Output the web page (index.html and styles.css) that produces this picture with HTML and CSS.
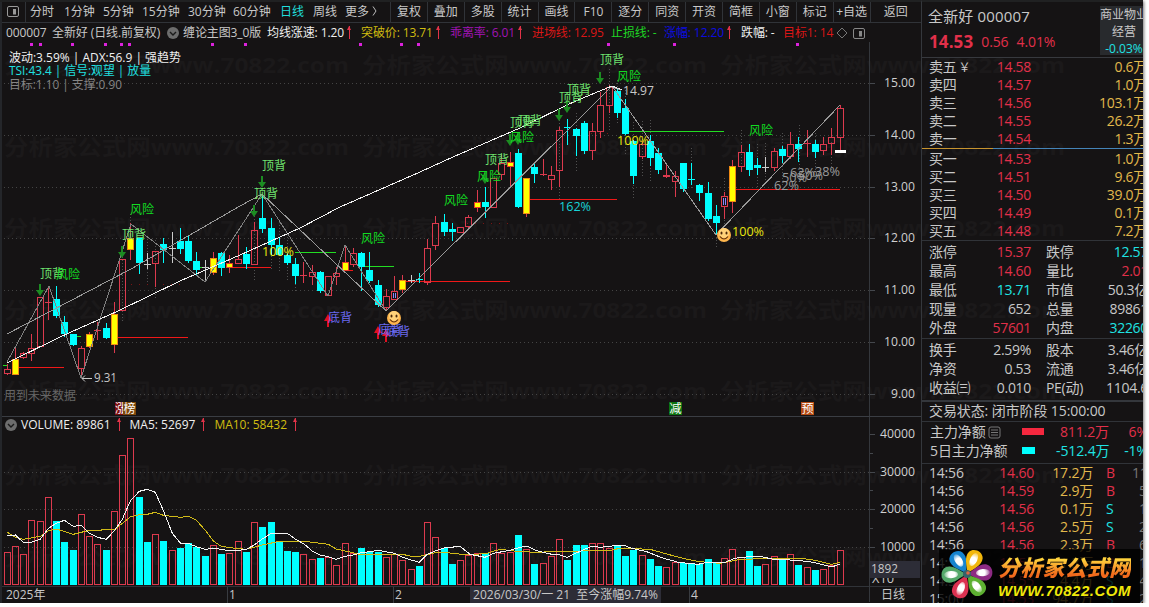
FILE: index.html
```html
<!DOCTYPE html>
<html lang="zh-CN">

<head>
    <meta charset="UTF-8">
    <meta name="viewport" content="width=device-width, initial-scale=1.0">
    <title>全新好 000007</title>
    <link rel="stylesheet" href="styles.css">
</head>

<body>
    <div class="app">
        <div class="main">
            <div class="toolbar">
                <div class="periods">
                    <span class="panel-btn"><svg width="12" height="11" viewBox="0 0 12 11"><rect x=".5" y=".5" width="11" height="10" rx="1.5" fill="none" stroke="#999"/><rect x="6" y="3" width="3" height="5.5" fill="#999"/></svg></span>
                    <span>分时</span>
                    <span>1分钟</span>
                    <span>5分钟</span>
                    <span>15分钟</span>
                    <span>30分钟</span>
                    <span>60分钟</span>
                    <span class="active">日线</span>
                    <span>周线</span>
                    <span>更多 <svg width="6" height="10" viewBox="0 0 6 10"><path d="M1 .5l3 4.5-3 4.5" fill="none" stroke="#bbb"/></svg></span>
                </div>
                <div class="tools">
                    <span>复权</span>
                    <span>叠加</span>
                    <span>多股</span>
                    <span>统计</span>
                    <span>画线</span>
                    <span>F10</span>
                    <span>逐分</span>
                    <span>同资</span>
                    <span>开资</span>
                    <span>简框</span>
                    <span>小窗</span>
                    <span>标记</span>
                    <span>+自选</span>
                    <span>返回</span>
                </div>
            </div>
            <div class="indicator">
                <span>000007</span>
                <span>全新好 (日线.前复权)</span>
                <span class="chev"><svg width="12" height="12" viewBox="0 0 12 12"><circle cx="6" cy="6" r="6" fill="#6d6d6d"/><path d="M3 5l3 3 3-3" fill="none" stroke="#1a1a1a" stroke-width="1.4"/></svg></span>
                <span>缠论主图3_0版</span>
                <span class="white">均线涨速: 1.20<i class="up"></i></span>
                <span class="yellow">突破价: 13.71<i class="up"></i></span>
                <span class="purple">乖离率: 6.01<i class="up"></i></span>
                <span class="red">进场线: 12.95</span>
                <span class="green">止损线: -</span>
                <span class="blue">涨幅: 12.20<i class="up"></i></span>
                <span class="white">跌幅: -</span>
                <span class="red">目标1: 14</span>
                <span><svg width="12" height="12" viewBox="0 0 12 12"><path d="M6 1l5 5-5 5-5-5z" fill="none" stroke="#777"/></svg></span>
                <span><svg width="12" height="11" viewBox="0 0 12 11"><rect x=".5" y=".5" width="11" height="10" rx="1.5" fill="none" stroke="#888"/><rect x="6" y="3" width="3" height="5.5" fill="#888"/></svg></span>
            </div>
            <svg class="kline" id="kline" width="919" height="374" viewBox="2 42 919 374"></svg>
            <div class="vol-head">
                <svg width="12" height="12" viewBox="0 0 12 12"><circle cx="6" cy="6" r="6" fill="#6d6d6d"/><path d="M3 5l3 3 3-3" fill="none" stroke="#1a1a1a" stroke-width="1.4"/></svg>
                <span class="white">VOLUME: 89861<i class="up"></i></span>
                <span class="white">MA5: 52697<i class="up"></i></span>
                <span class="yellow">MA10: 58432<i class="up"></i></span>
            </div>
            <svg class="volume" id="volume" width="919" height="152" viewBox="2 434 919 152"></svg>
            <div class="timeline">
                <span>2025年</span>
                <span class="month">1</span>
                <span class="month">2</span>
                <span class="cursor-date">2026/03/30/一 21&nbsp; 至今涨幅9.74%</span>
                <span class="month">4</span>
                <span class="cycle">日线</span>
            </div>
        </div>

        <div class="quote">
            <div class="quote-inner">
                <div class="head">
                    <div>
                        <div class="name">全新好 000007</div>
                        <div class="price"><b>14.53</b><span>0.56</span><span>4.01%</span></div>
                    </div>
                    <div class="sector">
                        <span>商业物业</span>
                        <span>经营</span>
                        <span class="cy">-0.03%</span>
                    </div>
                </div>
                <div class="book asks">
                    <div><span>卖五<small>￥</small></span><span class="r">14.58</span><span class="g">0.6万</span></div>
                    <div><span>卖四</span><span class="r">14.57</span><span class="g">1.0万</span></div>
                    <div><span>卖三</span><span class="r">14.56</span><span class="g">103.1万</span></div>
                    <div><span>卖二</span><span class="r">14.55</span><span class="g">26.2万</span></div>
                    <div><span>卖一</span><span class="r">14.54</span><span class="g">1.3万</span></div>
                </div>
                <div class="ratio"></div>
                <div class="book bids">
                    <div><span>买一</span><span class="r">14.53</span><span class="g">1.0万</span></div>
                    <div><span>买二</span><span class="r">14.51</span><span class="g">9.6万</span></div>
                    <div><span>买三</span><span class="r">14.50</span><span class="g">39.0万</span></div>
                    <div><span>买四</span><span class="r">14.49</span><span class="g">0.1万</span></div>
                    <div><span>买五</span><span class="r">14.48</span><span class="g">7.2万</span></div>
                </div>
                <div class="stats">
                    <div><span>涨停</span><span class="r">15.37</span><span>跌停</span><span class="cy">12.57</span></div>
                    <div><span>最高</span><span class="r">14.60</span><span>量比</span><span class="r">2.01</span></div>
                    <div><span>最低</span><span class="cy">13.71</span><span>市值</span><span>50.3亿</span></div>
                    <div><span>现量</span><span>652</span><span>总量</span><span>89861</span></div>
                    <div><span>外盘</span><span class="r">57601</span><span>内盘</span><span class="cy">32260</span></div>
                </div>
                <div class="stats extra">
                    <div><span>换手</span><span>2.59%</span><span>股本</span><span>3.46亿</span></div>
                    <div><span>净资</span><span>0.53</span><span>流通</span><span>3.46亿</span></div>
                    <div><span>收益㈢</span><span>0.010</span><span>PE(动)</span><span>1104.6</span></div>
                </div>
                <div class="status">交易状态: 闭市阶段 15:00:00</div>
                <div class="flow">
                    <div><span>主力净额<svg width="13" height="13" viewBox="0 0 13 13"><rect x="1" y="1" width="11" height="11" rx="2" fill="none" stroke="#777"/><path d="M3 4h7M3 6.5h7M3 9h7" stroke="#777"/></svg></span><i class="bar-in"></i><span class="r">811.2万</span><span class="r">6%</span></div>
                    <div><span>5日主力净额</span><i class="bar-out"></i><span class="cy">-512.4万</span><span class="cy">-1%</span></div>
                </div>
                <div class="ticks">
                    <div><span>14:56</span><span class="r">14.60</span><span class="g">17.2万</span><span class="r">B</span><span class="n wide">11</span></div>
                    <div><span>14:56</span><span class="r">14.59</span><span class="g">2.9万</span><span class="r">B</span><span class="n">5</span></div>
                    <div><span>14:56</span><span class="r">14.56</span><span class="g">0.1万</span><span class="cy">S</span><span class="n">1</span></div>
                    <div><span>14:56</span><span class="r">14.56</span><span class="g">2.5万</span><span class="cy">S</span><span class="n">2</span></div>
                    <div><span>14:56</span><span class="r">14.56</span><span class="g">2.3万</span><span class="r">B</span><span class="n">6</span></div>
                    <div><span>14:56</span><span class="r">14.56</span><span class="g">1.3万</span><span class="r">B</span><span class="n">1</span></div>
                    <div><span>14:57</span><span class="r">14.55</span><span class="g">4.4万</span><span class="cy">S</span><span class="n">4</span></div>
                    <div><span>15:00</span><span class="r">14.53</span><span class="g">94.7万</span><span class="cy">S</span><span class="n">29</span></div>
                </div>
            </div>
        </div>

        <div class="brand">
            <svg class="flower" width="56" height="54" viewBox="-28 -27 56 54">
                <defs>
                    <radialGradient id="core" gradientUnits="userSpaceOnUse" cx="0" cy="-15" r="9">
                        <stop offset="0" stop-color="#fff"/>
                        <stop offset=".35" stop-color="#fff"/>
                        <stop offset="1" stop-color="#fff" stop-opacity="0"/>
                    </radialGradient>
                    <path id="petal" d="M0 -1C-4 -8 -10 -14 -7.500 -21C-5 -27 5 -27 7.500 -21C10 -14 4 -8 0 -1z"/>
                    <ellipse id="glow" cx="0" cy="-16" rx="3.600" ry="7" fill="url(#core)"/>
                </defs>
                <g transform="rotate(-32)"><use href="#petal" fill="#1584cf"/><use href="#glow"/></g>
                <g transform="rotate(25)"><use href="#petal" fill="#f2b70c"/><use href="#glow"/></g>
                <g transform="rotate(85)"><use href="#petal" fill="#8d2a83"/><use href="#glow"/></g>
                <g transform="rotate(142)"><use href="#petal" fill="#5db031"/><use href="#glow"/></g>
                <g transform="rotate(203)"><use href="#petal" fill="#dc3151"/><use href="#glow"/></g>
                <g transform="rotate(268)"><use href="#petal" fill="#55a86a"/><use href="#glow"/></g>
                <circle r="4" fill="#35636b"/><circle cx="1" cy="-1" r="1.800" fill="#df6544"/>
            </svg>
            <div class="brand-text">
                <strong>分析家公式网</strong>
                <em>WWW.70822.COM</em>
            </div>
        </div>
    </div>

    <script src="chart.js"></script>
</body>

</html>
```

FILE: styles.css
```css
body {
    margin: 0;
    background: #fff;
    font-family: "Open Sans", "Noto Sans CJK SC", sans-serif;
    font-size: 12px;
    color: #c8c8c8;
    overflow: hidden;
}

.app {
    position: relative;
    display: flex;
    width: 1143px;
    height: 603px;
    background: #151314;
    box-shadow: 1px 1px 3px #777;
    overflow: hidden;
}

.app span {
    white-space: nowrap;
}

.main {
    box-sizing: border-box;
    width: 921px;
    padding-left: 2px;
    background: #151314;
    border-top: 2px solid #202122;
    box-shadow: inset 2px 0 #24262a;
    flex: none;
}

/* top toolbar */
.toolbar {
    display: flex;
    height: 20px;
    border-bottom: 1px solid #303338;
    line-height: 19px;
}

.periods {
    display: grid;
    grid-template-columns: 28px 34px 39px 39px 46px 45px 47px 33px 32px 45px;
    width: 388px;
}

.panel-btn {
    box-sizing: border-box;
    width: 24px;
    padding-left: 5px;
    border-right: 1px solid #303338;
}

.panel-btn svg {
    vertical-align: -1px;
}

.periods .active {
    color: #20dedc;
}

.tools {
    display: grid;
    grid-template-columns: repeat(13, 36.9px) 1fr;
    flex: 1;
    text-align: center;
}

.tools span {
    border-left: 1px solid #303338;
}

/* indicator line over the chart */
.indicator {
    display: grid;
    grid-template-columns: 46px 115px 16px 84px 94px 89px 82px 79px 53px 77px 42px 53px 17px 16px;
    height: 19px;
    padding-left: 4px;
    line-height: 19px;
    letter-spacing: -0.1px;
}

.indicator svg {
    vertical-align: -2px;
}

.up {
    display: inline-block;
    position: relative;
    width: 1px;
    height: 13px;
    margin-left: 5px;
    background: #e23348;
    vertical-align: -2px;
}

.up::before {
    content: "";
    position: absolute;
    left: -2px;
    top: 0;
    border: 2.5px solid transparent;
    border-top: 0;
    border-bottom: 4px solid #e23348;
}

.white { color: #efefef; }
.yellow { color: #d1bd10; }
.purple { color: #a113b4; }
.red { color: #dc1616; }
.green { color: #1fd624; }
.blue { color: #0c0ce0; }

.kline, .volume {
    display: block;
    overflow: visible;
}

.vol-head {
    display: flex;
    height: 17px;
    padding-left: 3px;
    border-top: 1px solid #3a3d43;
    line-height: 15px;
    align-items: flex-start;
}

.vol-head svg {
    margin: 2px 4px 0 0;
}

.vol-head .up {
    margin-left: 8px;
    margin-right: 10px;
}

.timeline {
    display: grid;
    grid-template-columns: 221px 166px 77px 219px 179px 1fr;
    height: 16px;
    padding-left: 4px;
    border-top: 1px solid #303338;
    line-height: 15px;
}

.timeline .month {
    border-left: 1px solid #383b40;
    padding-left: 1px;
}

.cursor-date {
    width: 191px;
    background: #2d2d37;
    text-align: center;
}

.cycle {
    padding-left: 13px;
}

/* quote panel */
.quote {
    width: 222px;
    overflow: hidden;
    border-left: 1px solid #34373c;
    border-top: 2px solid #202122;
    box-sizing: border-box;
}

.quote-inner {
    width: 226px;
    font-size: 14px;
}

.r { color: #e2304a; }
.g { color: #e2b94c; }
.cy { color: #1fe3e3; }

.head {
    display: flex;
    justify-content: space-between;
    height: 55px;
    border-bottom: 1px solid #37393e;
}

.name {
    padding: 4px 0 0 6px;
    font-size: 15px;
    line-height: 20px;
    letter-spacing: 0.15px;
}

.price {
    display: flex;
    gap: 8px;
    padding-left: 7px;
    line-height: 31px;
    color: #e2304a;
    letter-spacing: -0.1px;
}

.price b {
    font-size: 17px;
    letter-spacing: 0.1px;
}

.sector {
    display: flex;
    flex-direction: column;
    width: 48px;
    height: 49px;
    margin-top: 4px;
    background: #282a2d;
    font-size: 12px;
    line-height: 17px;
    text-align: center;
}

.book div {
    display: grid;
    grid-template-columns: 50px 52px 1fr;
    height: 18px;
    padding: 0 1px 0 7px;
    line-height: 18px;
    letter-spacing: -0.3px;
}

.book small {
    margin-left: 2px;
    font-size: 12px;
}

.book span + span {
    text-align: right;
}

.ratio {
    height: 1px;
    background: linear-gradient(to right, #c7942f 71px, #4484b8 71px);
}

.bids {
    padding-top: 1px;
}

.stats {
    border-top: 1px solid #303338;
    padding: 1px 0;
}

.stats div {
    display: grid;
    grid-template-columns: 50px 52px 62px 1fr;
    height: 19px;
    padding-left: 7px;
    line-height: 19px;
    letter-spacing: -0.3px;
}

.stats span:nth-child(even) {
    text-align: right;
}

.stats span:nth-child(3) {
    padding-left: 15px;
}

.extra {
    padding: 1px 0 3px;
}

.status {
    height: 19px;
    padding-left: 7px;
    border-top: 2px solid #34373c;
    border-bottom: 1px solid #303338;
    line-height: 18px;
    letter-spacing: -0.1px;
}

.flow {
    padding: 0 0 3px;
    border-bottom: 1px solid #303338;
}

.flow div {
    display: grid;
    grid-template-columns: 92px 34px 53px 1fr;
    align-items: center;
    height: 19px;
    padding-left: 8px;
    line-height: 19px;
    letter-spacing: -0.1px;
}

.flow svg {
    margin-left: 2px;
    vertical-align: -2px;
}

.flow span:nth-child(3),
.flow span:nth-child(4) {
    text-align: right;
}

.bar-in {
    width: 22px;
    height: 7px;
    background: #f5283f;
}

.bar-out {
    width: 13px;
    height: 7px;
    background: #00ffff;
}

.ticks div {
    display: grid;
    grid-template-columns: 50px 55px 59px 27px 1fr;
    height: 18px;
    padding-left: 7px;
    line-height: 18px;
    letter-spacing: -0.2px;
}

.ticks span:nth-child(2),
.ticks span:nth-child(3) {
    text-align: right;
}

.ticks span:nth-child(4) {
    padding-left: 13px;
}

.ticks .n {
    padding-left: 19px;
    color: #777;
}

.ticks .wide {
    padding-left: 12px;
}

/* site logo over the lower corner */
.brand {
    position: absolute;
    left: 939px;
    top: 549px;
    display: flex;
    width: 201px;
    height: 54px;
    background: rgba(0, 0, 0, 0.82);
}

.flower {
    margin-top: -2px;
}

.brand-text {
    display: flex;
    flex-direction: column;
    margin-left: 3px;
}

.brand strong {
    font-size: 22px;
    font-weight: 900;
    font-style: italic;
    line-height: 30px;
    margin-top: 3px;
    letter-spacing: 0.2px;
    background: linear-gradient(#ffd23c 25%, #f26a1c 75%);
    -webkit-background-clip: text;
    color: transparent;
    white-space: nowrap;
}

.brand em {
    font: italic bold 15px/17px "Liberation Sans", sans-serif;
    letter-spacing: 0.5px;
    color: #efe70a;
}

/* svg text */
.mark {
    font-size: 22px;
    font-weight: bold;
    fill: #1b191a;
}

.lbl { font-size: 12px; }
.top { fill: #6fe36f; }
.risk { fill: #12dc22; }
.bottom { fill: #6a6af0; }
.axis { font-size: 12px; fill: #d0d0d0; text-anchor: end; }
.badge { font-size: 12px; fill: #fff; }
```

FILE: chart.js
```javascript
const kline = document.getElementById('kline');
const volume = document.getElementById('volume');

const RED = '#dc3a4e';
const CYAN = '#00ffff';

const barX = i => Math.floor(7.1 + i * 8.247);

function rect(x, y, w, h, fill, stroke) {
    if (stroke) {
        return `<rect x="${x + 0.5}" y="${y + 0.5}" width="${w - 1}" height="${Math.max(h - 1, 1)}" fill="${fill}" stroke="${stroke}"/>`;
    }
    return `<rect x="${x}" y="${y}" width="${w}" height="${h}" fill="${fill}"/>`;
}

function poly(points, color, extra = '') {
    return `<polyline points="${points}" fill="none" stroke="${color}" ${extra}/>`;
}

function text(x, y, str, cls, fill = '', len = 0) {
    const f = fill ? ` fill="${fill}"` : '';
    const l = len ? ` textLength="${len}" lengthAdjust="spacingAndGlyphs"` : '';
    return `<text x="${x}" y="${y}" class="${cls}"${f}${l}>${str}</text>`;
}

// faint background text
function watermark(rows) {
    let s = '';
    for (const y of rows) {
        for (const x of [4, 362, 720]) {
            s += text(x, y + 8, '分析家公式网www.70822.com', 'mark', '', 345);
        }
    }
    return s;
}

// type, high, body top, body bottom, low
// r hollow, c falling, y yellow, w doji, p striped
const candles = [
    ['r', 364, 369, 374, 375], ['y', 347, 359, 375, 375], ['r', 352, 353, 358, 359], ['r', 334, 348, 354, 361],
    ['r', 297, 297, 347, 347], ['r', 286, 302, 303, 320], ['c', 286, 299, 316, 318], ['c', 316, 322, 334, 337],
    ['c', 334, 334, 345, 346], ['r', 346, 348, 369, 378], ['y', 332, 334, 347, 348], ['r', 322, 330, 331, 340],
    ['c', 323, 328, 338, 339], ['y', 302, 314, 345, 353], ['r', 259, 259, 311, 311], ['y', 223, 238, 250, 260],
    ['c', 238, 238, 263, 274], ['w', 253, 264, 265, 269], ['r', 251, 251, 264, 287], ['c', 238, 244, 250, 263],
    ['w', 232, 248, 249, 263], ['c', 228, 241, 249, 254], ['c', 235, 241, 261, 263], ['c', 252, 261, 270, 276],
    ['w', 260, 267, 268, 281], ['y', 252, 258, 273, 275], ['c', 252, 253, 268, 276], ['y', 255, 263, 268, 273],
    ['r', 235, 259, 264, 264], ['c', 247, 254, 264, 269], ['r', 222, 230, 265, 265], ['c', 195, 218, 229, 233],
    ['c', 218, 228, 245, 255], ['c', 237, 245, 255, 256], ['c', 253, 255, 263, 265], ['c', 258, 264, 276, 284],
    ['r', 262, 275, 276, 283], ['r', 265, 272, 277, 285], ['c', 271, 272, 291, 293], ['r', 276, 276, 296, 296],
    ['r', 267, 273, 277, 285], ['y', 245, 262, 271, 271], ['r', 248, 253, 265, 267], ['c', 252, 253, 267, 291],
    ['c', 252, 270, 281, 283], ['c', 280, 285, 305, 307], ['r', 289, 296, 308, 311], ['p', 276, 291, 300, 300],
    ['y', 275, 280, 290, 293], ['w', 275, 280, 281, 283], ['c', 273, 279, 280, 283], ['r', 239, 248, 283, 285],
    ['r', 216, 223, 246, 250], ['c', 214, 222, 232, 236], ['c', 223, 229, 232, 241], ['r', 227, 227, 233, 233],
    ['r', 215, 217, 227, 230], ['y', 190, 202, 208, 212], ['c', 187, 202, 207, 218], ['r', 178, 178, 208, 208],
    ['r', 154, 163, 175, 180], ['y', 152, 162, 167, 187], ['c', 149, 153, 207, 208], ['y', 178, 178, 214, 217],
    ['c', 163, 167, 174, 183], ['r', 159, 174, 175, 176], ['r', 166, 175, 180, 190], ['r', 127, 130, 171, 187],
    ['c', 119, 127, 128, 145], ['c', 128, 129, 136, 156], ['c', 121, 123, 151, 154], ['r', 123, 131, 151, 160],
    ['r', 92, 105, 132, 138], ['r', 85, 87, 106, 113], ['c', 88, 91, 113, 118], ['c', 99, 108, 134, 135],
    ['c', 140, 141, 176, 184], ['r', 141, 144, 157, 159], ['c', 135, 141, 158, 166], ['c', 148, 153, 170, 174],
    ['r', 163, 175, 177, 178], ['r', 171, 176, 182, 197], ['c', 163, 163, 189, 192], ['c', 163, 179, 180, 185],
    ['c', 184, 185, 193, 201], ['c', 182, 193, 219, 221], ['c', 205, 216, 223, 234], ['p', 192, 196, 207, 219],
    ['y', 160, 166, 202, 213], ['r', 145, 152, 167, 172], ['c', 144, 152, 170, 176], ['c', 158, 165, 168, 175],
    ['w', 157, 167, 168, 172], ['r', 148, 151, 168, 171], ['c', 146, 149, 156, 163], ['r', 132, 144, 157, 159],
    ['c', 137, 144, 149, 162], ['r', 130, 143, 144, 157], ['c', 140, 144, 152, 158], ['r', 137, 144, 151, 155],
    ['r', 128, 137, 144, 155], ['r', 105, 108, 138, 150]
];

function drawCandle([type, high, top, bottom, low], i) {
    const x = barX(i);
    const color = type === 'c' ? CYAN : type === 'w' ? '#ccc' : RED;
    const h = bottom - top;
    let s = '';
    if (high < top) s += rect(x, high, 1, top - high, color);
    if (low > bottom) s += rect(x, bottom, 1, low - bottom, color);
    if (h <= 2) return s + rect(x - 3, top, 7, h, color);
    if (type === 'c') return s + rect(x - 3, top, 7, h, CYAN);
    if (type === 'y') return s + rect(x - 3, top, 7, h, '#ffff00', h > 9 ? '#f08a14' : '#e83a2a');
    if (type === 'p') return s + rect(x - 3, top, 7, h, '#151314', RED) + rect(x - 1, top + 2, 1, h - 4, '#88f') + rect(x + 1, top + 2, 1, h - 4, '#88f');
    return s + rect(x - 3, top, 7, h, 'none', RED);
}

function downArrow(x, y) {
    return rect(x - 1, y - 12, 2, 8, '#1c8c22') + `<path d="M${x - 4} ${y - 6}l4 6 4-6z" fill="#1c8c22"/>`;
}

function upArrow(x, y) {
    return rect(x - 1, y + 5, 2, 8, '#e01020') + `<path d="M${x - 4} ${y + 7}l4-7 4 7z" fill="#e01020"/>`;
}

function smiley(x, y) {
    return `<g shape-rendering="auto"><circle cx="${x}" cy="${y}" r="7" fill="#ffb64d"/>
        <circle cx="${x}" cy="${y - 2}" r="5" fill="#ffd27a"/>
        <ellipse cx="${x - 2.5}" cy="${y - 2}" rx="1" ry="1.6" fill="#4a2708"/>
        <ellipse cx="${x + 2.5}" cy="${y - 2}" rx="1" ry="1.6" fill="#4a2708"/>
        <path d="M${x - 4} ${y + 1.5}q4 5 8 0" fill="none" stroke="#5a2a08" stroke-width="1.2"/></g>`;
}

function drawKline() {
    let s = watermark([65, 147, 228, 310, 391]);

    s += '<g shape-rendering="crispEdges">';
    s += rect(869, 42, 1, 374, '#34373c');
    [83, 135, 187, 238, 290, 342, 394].forEach(y => {
        s += `<path d="M4 ${y + 0.5}H870" stroke="#444" stroke-dasharray="1 3"/>`;
        s += rect(870, y, 5, 1, '#44474c');
    });
    [31, 40, 72, 105, 121, 129, 212, 245, 360, 401, 418, 608, 674, 797].forEach(x => {
        s += rect(x - 1, 43, 3, 3, '#dd22dd');
    });

    // dotted guides behind the candles
    [[122, 254, 322], [130, 214, 224], [147, 239, 283], [155, 240, 300], [254, 216, 282], [271, 223, 270],
     [279, 222, 272], [287, 234, 282], [295, 266, 293], [559, 120, 200], [576, 113, 172], [609, 69, 130],
     [617, 80, 125], [625, 90, 154], [633, 122, 198], [642, 121, 178], [650, 120, 181], [691, 148, 190],
     [716, 222, 248], [724, 178, 230], [741, 130, 172], [757, 144, 192], [765, 143, 180], [782, 133, 186],
     [799, 125, 168], [815, 130, 170], [831, 142, 170]].forEach(([x, a, b]) => {
        s += `<path d="M${x + 0.5} ${a}V${b}" stroke="#505050" stroke-dasharray="1 2"/>`;
    });
    [[131, 182, 284], [467, 514, 223], [567, 612, 133]].forEach(([a, b, y]) => {
        s += `<path d="M${a} ${y + 0.5}H${b}" stroke="#7a1515" stroke-dasharray="1 7"/>`;
    });

    [[18, 64, 367], [118, 188, 337], [228, 271, 267], [345, 353, 270], [404, 510, 281], [528, 617, 199], [735, 840, 189]].forEach(([a, b, y]) => {
        s += rect(a, y, b - a, 1, '#f01818');
    });
    [[3, 8, 365], [76, 81, 336], [199, 206, 267], [295, 336, 252], [361, 394, 266], [626, 724, 131]].forEach(([a, b, y]) => {
        s += rect(a, y, b - a, 1, '#22dd22');
    });
    s += candles.map(drawCandle).join('');

    // zigzag and trend lines
    s += poly('7,362 49,286 81,378 131,224 205,282 262,194 328,296 345,245 386,311', '#808080');
    s += poly('7,334 131,269 240,206 262,194 386,311 612,86 716,235 840,105', '#999');
    s += poly('7,363 60,337 118,311 180,281 240,255 300,228 340,207 420,172 453,157 520,128 567,105 590,95 612,86 622,90', '#f2f2f2');
    s += rect(835, 150, 11, 3, '#fff');
    s += '</g>';

    [[40, 296], [122, 258], [262, 188], [254, 217], [600, 84], [567, 113], [559, 121], [510, 146], [518, 145], [485, 184]].forEach(([x, y]) => {
        s += downArrow(x, y);
    });
    [[328, 314], [378, 326], [386, 329]].forEach(([x, y]) => {
        s += upArrow(x, y);
    });

    [[40, 273], [122, 234], [262, 165], [254, 193], [600, 59], [567, 89], [559, 97], [510, 122], [518, 120], [485, 159]].forEach(([x, y]) => {
        s += text(x, y + 5, '顶背', 'lbl top');
    });
    [[56, 274], [130, 209], [361, 238], [617, 76], [510, 137], [477, 176], [444, 200], [749, 130]].forEach(([x, y]) => {
        s += text(x, y + 5, '风险', 'lbl risk');
    });
    [[328, 317], [378, 329], [386, 331]].forEach(([x, y]) => {
        s += text(x, y + 5, '底背', 'lbl bottom');
    });

    s += smiley(394, 318) + smiley(724, 235);
    [[262, 251], [617, 140], [732, 231]].forEach(([x, y]) => {
        s += text(x, y + 5, '100%', 'lbl', '#e8e410', 32);
    });
    s += text(559, 211, '162%', 'lbl', '#18d4d8', 32);
    [[774, 186, '62%'], [782, 178, '50%'], [790, 173, '62%'], [798, 176, '50%'], [815, 172, '38%']].forEach(([x, y, t]) => {
        s += text(x, y + 4, t, 'lbl', '#9a9a9a', 25);
    });
    s += text(623, 95, '14.97', 'lbl', '#c8c8c8', 31);
    s += text(94, 382, '9.31', 'lbl', '#c8c8c8', 23);
    s += '<path d="M92 378.5H82M85 375.5l-3 3 3 3M612 87l9 3" stroke="#c8c8c8" fill="none"/>';

    s += text(9, 62, '波动:3.59% | ADX:56.9 | 强趋势', 'lbl', '#f0f0f0', 172);
    s += text(9, 75, 'TSI:43.4 | 信号:观望 | 放量', 'lbl', '#1fe0e0', 142);
    s += text(9, 89, '目标:1.10 | 支撑:0.90', 'lbl', '#858585', 113);
    s += text(4, 399.5, '用到未来数据', 'lbl', '#666');

    s += rect(115, 402, 10, 13, '#7b0c0c') + text(115, 413, '涨', 'badge');
    s += rect(123, 402, 13, 13, '#7e480a') + text(123.5, 413, '榜', 'badge');
    s += rect(669, 402, 13, 13, '#0b7210') + text(669.5, 413, '减', 'badge');
    s += rect(801, 402, 13, 13, '#b54a12') + text(801.5, 413, '预', 'badge');

    [83, 135, 187, 238, 290, 342, 394].forEach((y, i) => {
        s += text(915, y + 4, (15 - i).toFixed(2), 'axis', '', i < 6 ? 31 : 24);
    });
    kline.innerHTML = s;
}

// bar tops in thirds of a pixel below y = 395
const volumes = 'r472 r454 r478 r376 r379 r307 c378 c441 c465 r358 r424 r448 c465 r349 r181 r130 c306 c441 r418 c438 r466 c459 c444 c456 c483 r451 c477 r475 r439 c471 r382 c396 c381 c438 c468 c471 r478 r493 c489 r487 r511 r445 r475 c459 c471 c471 r487 r478 r496 r523 c513 r382 r427 c459 c507 r496 r481 r475 c474 r445 r475 r472 c420 r463 c507 r505 r484 r433 c495 c450 c450 r445 r445 r460 c453 c483 c465 r481 c492 c513 r517 r502 c505 c504 c507 c492 c504 r490 r463 r487 c468 c513 r508 r484 c495 r478 c510 r517 c525 r523 r511 r466'.split(' ');

const ma5 = '22,421 46,420 70,442 94,442 121,433 145,400 169,385 193,376 220,394 244,391 268,415 292,427 319,433 343,407 367,373 391,318 418,289 442,283 466,292 490,346 517,415 541,444 565,445 589,455 616,463 640,460 664,463 688,468 715,466 739,463 763,450 787,432 814,415 862,415 886,432 913,448 937,468 961,480 985,485 1009,493 1036,484 1060,480 1084,473 1108,470 1135,466 1183,475 1207,487 1234,495 1258,502 1282,478 1306,468 1333,459 1380,454 1410,478 1455,487 1480,475 1530,466 1560,457 1583,454 1606,466 1655,478 1680,480 1702,487 1740,469 1775,454 1800,457 1855,451 1875,452 1895,460 1940,470 1985,488 2035,502 2095,508 2120,502 2170,504 2205,490 2245,485 2285,485 2320,493 2390,496 2440,502 2495,516 2520,507';
const ma10 = '22,412 46,426 70,433 121,424 145,408 169,402 220,418 268,406 343,404 391,366 418,359 442,358 466,352 490,361 541,367 565,364 589,376 616,406 640,438 664,454 690,458 739,463 787,450 838,439 913,439 985,448 1009,462 1036,468 1084,479 1160,479 1207,478 1234,484 1258,484 1306,473 1340,473 1405,480 1460,475 1500,463 1560,470 1620,472 1680,468 1710,470 1760,467 1820,468 1860,460 1900,461 1950,463 2000,477 2060,493 2100,500 2160,505 2210,495 2270,491 2350,492 2410,491 2440,495 2495,508 2520,502';

const scale = pts => pts.split(' ').map(p => {
    const [x, y] = p.split(',').map(Number);
    return `${(x / 3).toFixed(1)},${(395 + y / 3).toFixed(1)}`;
}).join(' ');

function drawVolume() {
    let s = watermark([475, 557]);
    s += '<g shape-rendering="crispEdges">';
    s += rect(869, 417, 1, 185, '#34373c');
    [472, 509, 547].forEach(y => {
        s += `<path d="M4 ${y + 0.5}H870" stroke="#444" stroke-dasharray="1 3"/>`;
    });
    [434, 472, 509, 547].forEach(y => {
        s += rect(870, y, 5, 1, '#44474c');
    });
    [453, 490, 528].forEach(y => {
        s += rect(870, y, 3, 1, '#44474c');
    });
    volumes.forEach((v, i) => {
        const y = Math.round(395 + Number(v.slice(1)) / 3);
        s += v[0] === 'c' ? rect(barX(i) - 3, y, 7, 585 - y, CYAN) : rect(barX(i) - 3, y, 7, 585 - y, 'none', RED);
    });
    s += poly(scale(ma10), '#d0ba18');
    s += poly(scale(ma5), '#f4f4f4');
    s += '</g>';
    [[438, '40000'], [476, '30000'], [513, '20000'], [551, '10000']].forEach(([y, t]) => {
        s += text(915, y, t, 'axis', '', 35);
    });
    s += text(872, 583, 'X10', 'lbl', '#c8c8c8', 22);
    s += rect(870, 561, 50, 17, '#2d2d37') + text(871, 573, '1892', 'lbl', '#c8c8c8', 27);
    volume.innerHTML = s;
}

drawKline();
drawVolume();
```
